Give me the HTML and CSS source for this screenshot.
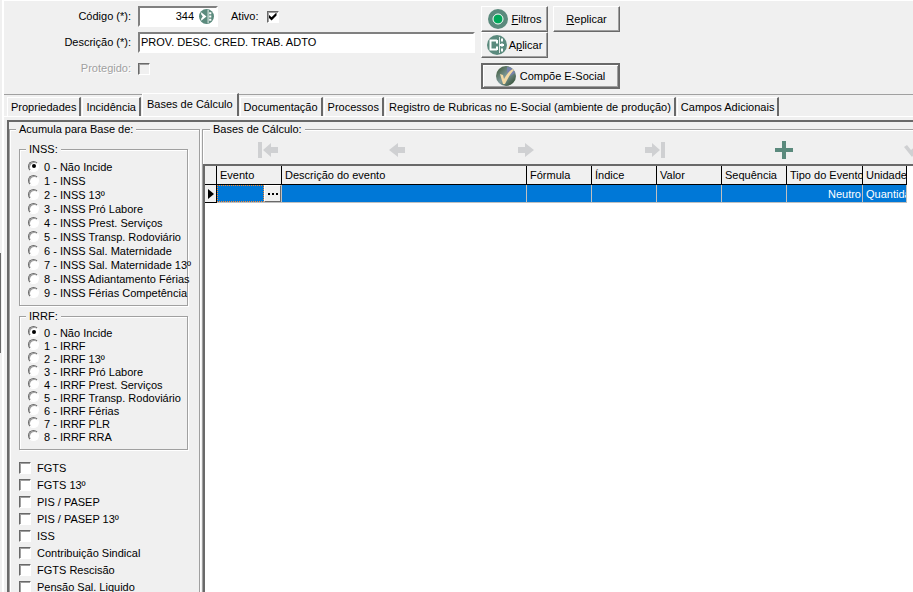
FILE: index.html
```html
<!DOCTYPE html>
<html lang="pt-BR">
<head>
  <meta charset="UTF-8">
  <meta name="viewport" content="width=device-width, initial-scale=1.0">
  <title>Rubricas</title>
  <link rel="stylesheet" href="styles.css">
</head>
<body>
  <div class="splitter"><div class="splitter-grip"></div></div>

  <main class="window">
    <header class="top">
      <form class="form">
        <label class="form-label" for="codigo">Código (*):</label>
        <div class="form-row">
          <div class="field field-code">
            <input type="text" id="codigo" value="344">
            <button type="button" class="search" aria-label="Pesquisar">
              <svg width="15" height="15" viewBox="0 0 14 14">
                <circle cx="7" cy="7" r="7" fill="#5b8a7d"/>
                <path d="M2 3l5 4-5 4V9l1.500-2L2 5z" fill="#fff"/>
                <path d="M8.500 1v12" stroke="#dfe9e6" stroke-width="1"/>
                <path d="M10.500 3v2M10.500 6v2M10.500 9v2" stroke="#fff" stroke-width="2"/>
              </svg>
            </button>
          </div>
          <label class="ativo" for="ativo">Ativo:</label>
          <input type="checkbox" class="check" id="ativo" checked>
        </div>

        <label class="form-label" for="descricao">Descrição (*):</label>
        <div class="field"><input type="text" id="descricao" value="PROV. DESC. CRED. TRAB. ADTO"></div>

        <label class="form-label disabled" for="protegido">Protegido:</label>
        <div class="form-row"><input type="checkbox" class="check" id="protegido" disabled></div>
      </form>

      <div class="actions">
        <button type="button" class="btn">
          <svg width="20" height="20" viewBox="0 0 20 20">
            <circle cx="10" cy="10" r="10" fill="#5b8a7d"/>
            <circle cx="10" cy="10" r="5" fill="#00a859" stroke="#fff" stroke-width="1"/>
          </svg>
          <span><u>F</u>iltros</span>
        </button>
        <button type="button" class="btn"><span><u>R</u>eplicar</span></button>
        <button type="button" class="btn btn-aplicar">
          <svg width="20" height="20" viewBox="0 0 20 20">
            <circle cx="10" cy="10" r="10" fill="#5b8a7d"/>
            <path d="M10 5.500H3.500v9H10M10 5v3.500M10 11.500V15" fill="none" stroke="#fff" stroke-width="2"/>
            <path d="M12.500 2v16" stroke="#dfe9e6"/>
            <path d="M13 10h4M15 3.500v3M15 8.500v3M15 13.500v3" stroke="#fff" stroke-width="2"/>
          </svg>
          <span>A<u>p</u>licar</span>
        </button>
        <button type="button" class="btn btn-wide">
          <svg width="20" height="20" viewBox="0 0 20 20">
            <defs>
              <linearGradient id="globe" x1="0" y1="0" x2="1" y2="1">
                <stop offset="0" stop-color="#36502a"/>
                <stop offset="0.500" stop-color="#7f9a9c"/>
                <stop offset="1" stop-color="#24401c"/>
              </linearGradient>
            </defs>
            <circle cx="10" cy="10" r="10" fill="url(#globe)"/>
            <path d="M11 1c4 0 7 3 8 6l-5 3-3-4z" fill="#7682ab"/>
            <path d="M4 8l3 1 1 4c3-5 5-8 9-10l1 1c-4 4-6 8-9 14l-2 0z" fill="#f3d9a4"/>
          </svg>
          <span>Compõe E-Social</span>
        </button>
      </div>
    </header>

    <nav class="tabs">
      <button type="button" class="tab">Propriedades</button>
      <button type="button" class="tab">Incidência</button>
      <button type="button" class="tab active">Bases de Cálculo</button>
      <button type="button" class="tab">Documentação</button>
      <button type="button" class="tab">Processos</button>
      <button type="button" class="tab">Registro de Rubricas no E-Social (ambiente de produção)</button>
      <button type="button" class="tab">Campos Adicionais</button>
    </nav>

    <div class="page">
      <div class="frame">
        <fieldset class="group side">
          <legend>Acumula para Base de:</legend>

          <fieldset class="group options">
            <legend>INSS:</legend>
            <label><input type="radio" class="radio" name="inss" checked>0 - Não Incide</label>
            <label><input type="radio" class="radio" name="inss">1 - INSS</label>
            <label><input type="radio" class="radio" name="inss">2 - INSS 13º</label>
            <label><input type="radio" class="radio" name="inss">3 - INSS Pró Labore</label>
            <label><input type="radio" class="radio" name="inss">4 - INSS Prest. Serviços</label>
            <label><input type="radio" class="radio" name="inss">5 - INSS Transp. Rodoviário</label>
            <label><input type="radio" class="radio" name="inss">6 - INSS Sal. Maternidade</label>
            <label><input type="radio" class="radio" name="inss">7 - INSS Sal. Maternidade 13º</label>
            <label><input type="radio" class="radio" name="inss">8 - INSS Adiantamento Férias</label>
            <label><input type="radio" class="radio" name="inss">9 - INSS Férias Competência</label>
          </fieldset>

          <fieldset class="group options irrf">
            <legend>IRRF:</legend>
            <label><input type="radio" class="radio" name="irrf" checked>0 - Não Incide</label>
            <label><input type="radio" class="radio" name="irrf">1 - IRRF</label>
            <label><input type="radio" class="radio" name="irrf">2 - IRRF 13º</label>
            <label><input type="radio" class="radio" name="irrf">3 - IRRF Pró Labore</label>
            <label><input type="radio" class="radio" name="irrf">4 - IRRF Prest. Serviços</label>
            <label><input type="radio" class="radio" name="irrf">5 - IRRF Transp. Rodoviário</label>
            <label><input type="radio" class="radio" name="irrf">6 - IRRF Férias</label>
            <label><input type="radio" class="radio" name="irrf">7 - IRRF PLR</label>
            <label><input type="radio" class="radio" name="irrf">8 - IRRF RRA</label>
          </fieldset>

          <div class="checks">
            <label><input type="checkbox" class="check">FGTS</label>
            <label><input type="checkbox" class="check">FGTS 13º</label>
            <label><input type="checkbox" class="check">PIS / PASEP</label>
            <label><input type="checkbox" class="check">PIS / PASEP 13º</label>
            <label><input type="checkbox" class="check">ISS</label>
            <label><input type="checkbox" class="check">Contribuição Sindical</label>
            <label><input type="checkbox" class="check">FGTS Rescisão</label>
            <label><input type="checkbox" class="check">Pensão Sal. Liquido</label>
          </div>
        </fieldset>

        <fieldset class="group bases">
          <legend>Bases de Cálculo:</legend>
          <div class="navigator">
            <button type="button" aria-label="Primeiro">
              <svg width="20" height="16" viewBox="0 0 20 16" fill="#cfd0d2"><path d="M0 0h4v16H0zM5 8l8-7v4h7v6h-7v4z"/></svg>
            </button>
            <button type="button" aria-label="Anterior">
              <svg width="16" height="16" viewBox="0 0 16 16" fill="#cfd0d2"><path d="M0 8l9-7v4h7v6H9v4z"/></svg>
            </button>
            <button type="button" aria-label="Próximo">
              <svg width="16" height="16" viewBox="0 0 16 16" fill="#cfd0d2"><path d="M16 8L7 1v4H0v6h7v4z"/></svg>
            </button>
            <button type="button" aria-label="Último">
              <svg width="20" height="16" viewBox="0 0 20 16" fill="#cfd0d2"><path d="M16 0h4v16h-4zM15 8L7 1v4H0v6h7v4z"/></svg>
            </button>
            <button type="button" aria-label="Incluir">
              <svg width="18" height="18" viewBox="0 0 18 18" fill="#5b8a7d"><path d="M7 0h4v7h7v4h-7v7H7v-7H0V7h7z"/></svg>
            </button>
            <button type="button" aria-label="Confirmar">
              <svg width="18" height="16" viewBox="0 0 18 16" fill="#cfd0d2"><path d="M0 5l3-2 4 5 8-7 3 2L8 15z"/></svg>
            </button>
          </div>

          <div class="grid-box">
            <table class="grid">
              <colgroup>
                <col class="col-mark"><col class="col-std"><col class="col-desc"><col class="col-std"><col class="col-std">
                <col class="col-std"><col class="col-std"><col class="col-tipo"><col class="col-unid">
              </colgroup>
              <thead>
                <tr>
                  <th></th><th>Evento</th><th>Descrição do evento</th><th>Fórmula</th><th>Índice</th>
                  <th>Valor</th><th>Sequência</th><th>Tipo do Evento</th><th>Unidade</th>
                </tr>
              </thead>
              <tbody>
                <tr>
                  <td class="mark"><svg width="6" height="10" viewBox="0 0 6 10"><path d="M0 0l6 5-6 5z"/></svg></td>
                  <td class="editing">
                    <div class="edit-cell"><span class="focus"></span><button type="button" class="dots" aria-label="Selecionar evento"><i></i><i></i><i></i></button></div>
                  </td>
                  <td></td><td></td><td></td><td></td><td></td>
                  <td class="right">Neutro</td><td>Quantidade</td>
                </tr>
              </tbody>
            </table>
          </div>
        </fieldset>
      </div>
    </div>
  </main>
</body>
</html>
```
FILE: styles.css
```css
* {
  box-sizing: border-box;
}
body {
  display: flex;
  height: 100vh;
  margin: 0;
  overflow: hidden;
  background: #f0f0f0;
  color: #000;
  font: 11px/14px "Liberation Sans", Arial, sans-serif;
}
input, button {
  margin: 0;
  padding: 0;
  border: 0;
  border-radius: 0;
  background: none;
  color: inherit;
  font: inherit;
}
svg {
  display: block;
  flex: none;
}

.splitter {
  display: flex;
  flex: 0 0 4px;
  align-items: center;
  padding-top: 14px;
  border-right: 2px solid #fff;
}
.splitter-grip {
  width: 1px;
  height: 100px;
  background: #696969;
}
.window {
  display: flex;
  flex: 1;
  flex-direction: column;
  min-width: 0;
}

/* form header */
.top {
  display: flex;
  gap: 6px;
  height: 95px;
  flex: none;
  padding-top: 5px;
  border-top: 1px solid #fff;
  border-bottom: 1px solid #a0a0a0;
}
.form {
  display: grid;
  grid-template-columns: 127px 337px;
  grid-template-rows: 21px 21px 21px;
  gap: 5px 7px;
  align-items: center;
}
.form-label {
  padding-bottom: 1px;
  text-align: right;
}
.disabled {
  color: #a0a0a0;
  text-shadow: 1px 1px 0 #fff;
}
.form-row {
  display: flex;
  align-items: center;
}
.field {
  display: flex;
  align-items: center;
  height: 21px;
  padding: 0 1px 1px;
  background: #fff;
  border: 2px solid;
  border-color: #808080 #fff #fff #808080;
}
.field input {
  width: 100%;
  min-width: 0;
  outline: 0;
}
.field-code {
  width: 80px;
  gap: 5px;
  padding-right: 2px;
}
.field-code input {
  text-align: right;
}
.ativo {
  margin: 0 8px 0 13px;
  padding-bottom: 1px;
}

.check, .radio {
  appearance: none;
  flex: none;
  display: grid;
  place-items: center;
  width: 12px;
  height: 12px;
  background: #fff;
  border: 1px solid;
  border-color: #696969 #fff #fff #696969;
  box-shadow: inset 1px 1px 0 #a0a0a0;
}
.check:disabled {
  background: #f0f0f0;
}
.check:checked::before {
  content: "";
  width: 8px;
  height: 8px;
  background: #000;
  clip-path: polygon(0 25%, 38% 58%, 100% 0, 100% 38%, 38% 100%, 0 62%);
}
.radio {
  width: 11px;
  height: 11px;
  margin-bottom: 2px;
  border-radius: 50%;
}
.radio:checked::before {
  content: "";
  width: 4px;
  height: 4px;
  border-radius: 50%;
  background: #000;
}

.actions {
  display: grid;
  grid-template-columns: 67px 67px;
  grid-template-rows: 26px 26px 26px;
  column-gap: 5px;
}
.btn {
  display: flex;
  align-items: center;
  justify-content: center;
  gap: 4px;
  border: 1px solid;
  border-color: #fff #696969 #696969 #fff;
  box-shadow: inset -1px -1px 0 #a0a0a0;
}
.btn-aplicar {
  gap: 2px;
}
.btn-wide {
  grid-column: 1 / 3;
  margin-top: 5px;
  height: 26px;
  border: 2px solid;
  border-color: #696969;
  box-shadow: inset 1px 1px 0 #fff, inset -1px -1px 0 #a0a0a0;
}

/* tabs */
.tabs {
  display: flex;
  align-items: flex-end;
  flex: none;
  gap: 1px;
  height: 21px;
  padding-left: 3px;
}
.tab {
  height: 19px;
  padding: 0 3px;
  border: 1px solid #fff;
  border-right: 2px solid #696969;
  border-bottom: 0;
  white-space: nowrap;
}
.active {
  height: 23px;
  padding: 0 4px 2px;
  background: #f0f0f0;
}

.page {
  display: flex;
  flex: 1;
  min-height: 0;
  padding: 3px 0 0 3px;
  border-top: 1px solid #fff;
}
.frame {
  display: flex;
  flex: 1;
  gap: 2px;
  min-width: 0;
  min-height: 0;
  overflow: hidden;
  border-top: 2px solid #696969;
  border-left: 2px solid #696969;
}

.group {
  min-width: 0;
  margin: 0;
  padding: 0;
  border: 1px solid #a0a0a0;
  box-shadow: 1px 1px 0 #fff, inset 1px 1px 0 #fff;
}
.group > legend {
  height: 14px;
  margin-left: 7px;
  padding: 0 3px;
  background: #f0f0f0;
}
.side {
  flex: 0 0 191px;
  padding: 6px 11px 0 9px;
  border-bottom: 0;
}
.side > legend {
  margin-left: -3px;
}
.options {
  padding: 4px 0 5px 8px;
  margin-bottom: 3px;
}
.options > legend {
  margin-left: -2px;
}
.options label, .checks label {
  display: flex;
  align-items: center;
  gap: 6px;
  height: 14px;
  white-space: nowrap;
}
.options label {
  gap: 5px;
}
.irrf {
  padding-top: 3px;
  padding-bottom: 6px;
}
.irrf label {
  height: 13px;
}
.checks {
  padding-top: 6px;
}
.checks label {
  height: 17px;
}

/* events grid */
.bases {
  display: flex;
  flex: 1;
  flex-direction: column;
  overflow: hidden;
  border-right: 0;
  border-bottom: 0;
}
.navigator {
  display: flex;
  flex: 0 0 28px;
}
.navigator button {
  display: flex;
  flex: 0 0 129px;
  align-items: center;
  justify-content: center;
}
.grid-box {
  flex: 1;
  background: #fff;
  border-top: 2px solid #696969;
  border-left: 2px solid #696969;
}
.grid {
  width: 702px;
  table-layout: fixed;
  border-spacing: 0;
}
.col-mark { width: 12px; }
.col-std { width: 65px; }
.col-desc { width: 245px; }
.col-tipo { width: 76px; }
.col-unid { width: 44px; }
.grid th, .grid td {
  height: 18px;
  padding: 0 1px 0 3px;
  overflow: hidden;
  text-align: left;
  font-weight: normal;
  white-space: nowrap;
}
.grid th {
  height: 19px;
  background: #f0f0f0;
  border-right: 1px solid #000;
  border-bottom: 1px solid #000;
}
.grid td {
  background: #0078d7;
  border-right: 1px solid #c0c0c0;
  border-bottom: 1px solid #c0c0c0;
  color: #fff;
}
.grid .mark {
  background: #f0f0f0;
  border-color: #000;
}
.grid .editing {
  padding: 0;
}
.grid .right {
  text-align: right;
}
.edit-cell {
  display: flex;
  height: 17px;
}
.focus {
  flex: 1;
  border: 1px dotted #ff8728;
}
.dots {
  display: flex;
  align-items: center;
  justify-content: center;
  gap: 2px;
  width: 17px;
  background: #f0f0f0;
  border: 1px solid;
  border-color: #fff #696969 #696969 #fff;
}
.dots i {
  width: 2px;
  height: 2px;
  background: #000;
}
```
